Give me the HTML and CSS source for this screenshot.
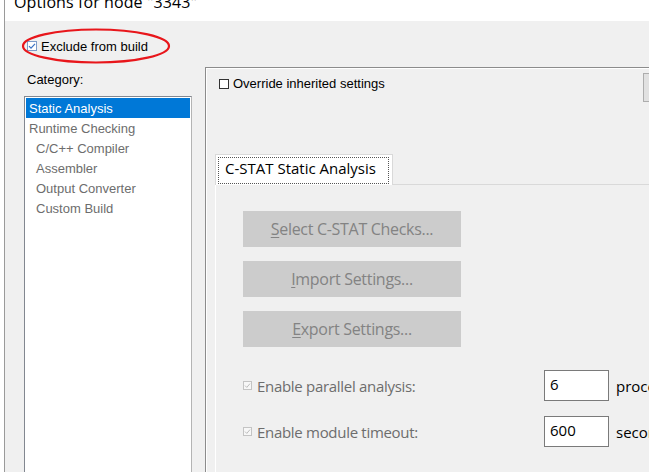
FILE: index.html
```html
<!DOCTYPE html>
<html lang="en">
<head>
	<meta charset="UTF-8">
	<title>Options for node "3343"</title>
	<link rel="stylesheet" href="styles.css">
</head>
<body>
	<div class="window">
		<div class="title"><span>Options for node "3343"</span></div>
		<div class="exclude">
			<svg class="chk" width="10" height="10" viewBox="0 0 10 10">
				<rect x="0.5" y="0.5" width="9" height="9" fill="#fff" stroke="#7d9cc9"/>
				<path d="M2 5.2 L4 7.2 L8 2.8" fill="none" stroke="#3c73c4" stroke-width="1.2"/>
			</svg>
			<span>Exclude from build</span>
		</div>
		<svg class="mark" width="150" height="36" viewBox="0 0 150 36">
			<ellipse cx="75" cy="18" rx="73" ry="16.5" fill="none" stroke="#e8161b" stroke-width="2.2"/>
		</svg>
		<div class="main">
			<div class="side">
				<div class="cat-label">Category:</div>
				<ul class="cat-list">
					<li class="sel">Static Analysis</li>
					<li>Runtime Checking</li>
					<li class="sub">C/C++ Compiler</li>
					<li class="sub">Assembler</li>
					<li class="sub">Output Converter</li>
					<li class="sub">Custom Build</li>
				</ul>
			</div>
			<div class="panel">
				<div class="override">
					<label><span class="box"></span>Override inherited settings</label>
					<button class="factory"></button>
				</div>
				<div class="tabs">
					<div class="tab"><span>C-STAT Static Analysis</span></div>
				</div>
				<div class="page">
					<button class="btn"><u>S</u>elect C-STAT Checks...</button>
					<button class="btn"><u>I</u>mport Settings...</button>
					<button class="btn"><u>E</u>xport Settings...</button>
					<div class="opt-row">
						<label class="opt">
							<svg width="9" height="9" viewBox="0 0 9 9">
								<rect x="0.5" y="0.5" width="8" height="8" fill="#f7f7f7" stroke="#c4c4c4"/>
								<path d="M2 4.6 L3.8 6.4 L7 2.6" fill="none" stroke="#bdbdbd" stroke-width="1"/>
							</svg>
							Enable parallel analysis:
						</label>
						<span class="field">6</span>
						<span class="unit">processes</span>
					</div>
					<div class="opt-row">
						<label class="opt">
							<svg width="9" height="9" viewBox="0 0 9 9">
								<rect x="0.5" y="0.5" width="8" height="8" fill="#f7f7f7" stroke="#c4c4c4"/>
								<path d="M2 4.6 L3.8 6.4 L7 2.6" fill="none" stroke="#bdbdbd" stroke-width="1"/>
							</svg>
							Enable module timeout:
						</label>
						<span class="field">600</span>
						<span class="unit">seconds</span>
					</div>
				</div>
			</div>
		</div>
	</div>
</body>
</html>
```

FILE: styles.css
```css
html,body{
	margin: 0;
	height: 100%;
	overflow: hidden;
	background: #fff;
}
.window{
	position: relative;
	margin-left: 4px;
	height: 472px;
	border-left: 1px solid #9a9a9a;
	background: #f0f0f0;
	font: 13px "Liberation Sans", Arial, sans-serif;
	color: #000;
}
	.title{
		height: 21px;
		overflow: hidden;
		background: #fff;
	}
		.title span{
			display: block;
			margin-top: -8px;
			padding-left: 9px;
			font: 16px/20px "Open Sans", sans-serif;
			letter-spacing: 0.1px;
			white-space: nowrap;
		}
	.exclude{
		display: flex;
		align-items: center;
		height: 16px;
		margin-top: 17px;
		padding-left: 22px;
	}
		.exclude .chk{
			margin-right: 4px;
		}
	.mark{
		position: absolute;
		left: 16px;
		top: 28px;
	}
	.main{
		display: flex;
		margin-top: 13px;
	}
		.side{
			width: 200px;
			flex: none;
		}
			.cat-label{
				padding: 5px 0 0 22px;
				line-height: 16px;
				height: 29px;
				box-sizing: border-box;
			}
			.cat-list{
				list-style: none;
				margin: 0 0 0 19px;
				padding: 1px;
				width: 168px;
				height: 400px;
				box-sizing: border-box;
				border: 1px solid #828790;
				border-right-color: #b4b4b4;
				background: #fff;
			}
				.cat-list li{
					height: 20px;
					line-height: 21px;
					padding-left: 3px;
					color: #6d6d6d;
					white-space: nowrap;
				}
				.cat-list .sub{
					padding-left: 10px;
				}
				.cat-list .sel{
					background: #0078d7;
					color: #fff;
				}
		.panel{
			flex: none;
			width: 540px;
			height: 420px;
			border: 1px solid #8c8c8c;
			box-shadow: inset 1px 1px 0 #fff;
			padding: 5px 0 0 9px;
			box-sizing: border-box;
		}
			.override{
				display: flex;
				justify-content: space-between;
				height: 29px;
				padding-right: 11px;
			}
				.override label{
					display: flex;
					align-items: center;
					align-self: flex-start;
					margin: 3px 0 0 4px;
					line-height: 15px;
				}
				.box{
					width: 8px;
					height: 8px;
					margin-right: 4px;
					border: 1px solid #333;
					background: #fff;
				}
				.factory{
					width: 90px;
					height: 29px;
					border: 1px solid #adadad;
					background: #e1e1e1;
				}
			.tabs{
				margin-top: 52px;
				display: flex;
			}
				.tab{
					width: 178px;
					height: 31px;
					margin-bottom: -1px;
					box-sizing: border-box;
					padding: 2px 3px 0 2px;
					border: 1px solid #d9d9d9;
					border-bottom: none;
					background: #fff;
				}
					.tab span{
						display: block;
						height: 25px;
						padding-left: 6px;
						border: 1px dotted #555;
						font: 15px/21px "Open Sans", sans-serif;
						white-space: nowrap;
					}
			.page{
				border-top: 1px solid #d9d9d9;
				border-left: 1px solid #fff;
				height: 300px;
				padding: 26px 0 0 27px;
				font-family: "Open Sans", sans-serif;
			}
				.btn{
					display: block;
					width: 218px;
					height: 36px;
					margin-bottom: 14px;
					border: none;
					background: #cccccc;
					color: #838383;
					font: 16px "Open Sans", sans-serif;
					letter-spacing: -0.3px;
					padding: 0;
				}
					.btn u{
						text-decoration-thickness: 1px;
						text-underline-offset: 2px;
					}
				.opt-row{
					display: flex;
					align-items: center;
					height: 31px;
					white-space: nowrap;
				}
				.btn + .opt-row{
					margin-top: 23px;
				}
				.opt-row + .opt-row{
					margin-top: 15px;
				}
					.opt{
						display: flex;
						align-items: center;
						width: 301px;
						color: #6d6d6d;
						font-size: 15px;
						letter-spacing: -0.3px;
					}
						.opt svg{
							margin-right: 5px;
						}
					.field{
						width: 65px;
						height: 31px;
						box-sizing: border-box;
						border: 1px solid #7a7a7a;
						background: #fff;
						padding-left: 5px;
						font-size: 15px;
						line-height: 26px;
					}
					.unit{
						margin-left: 7px;
						font-size: 15px;
					}
```
